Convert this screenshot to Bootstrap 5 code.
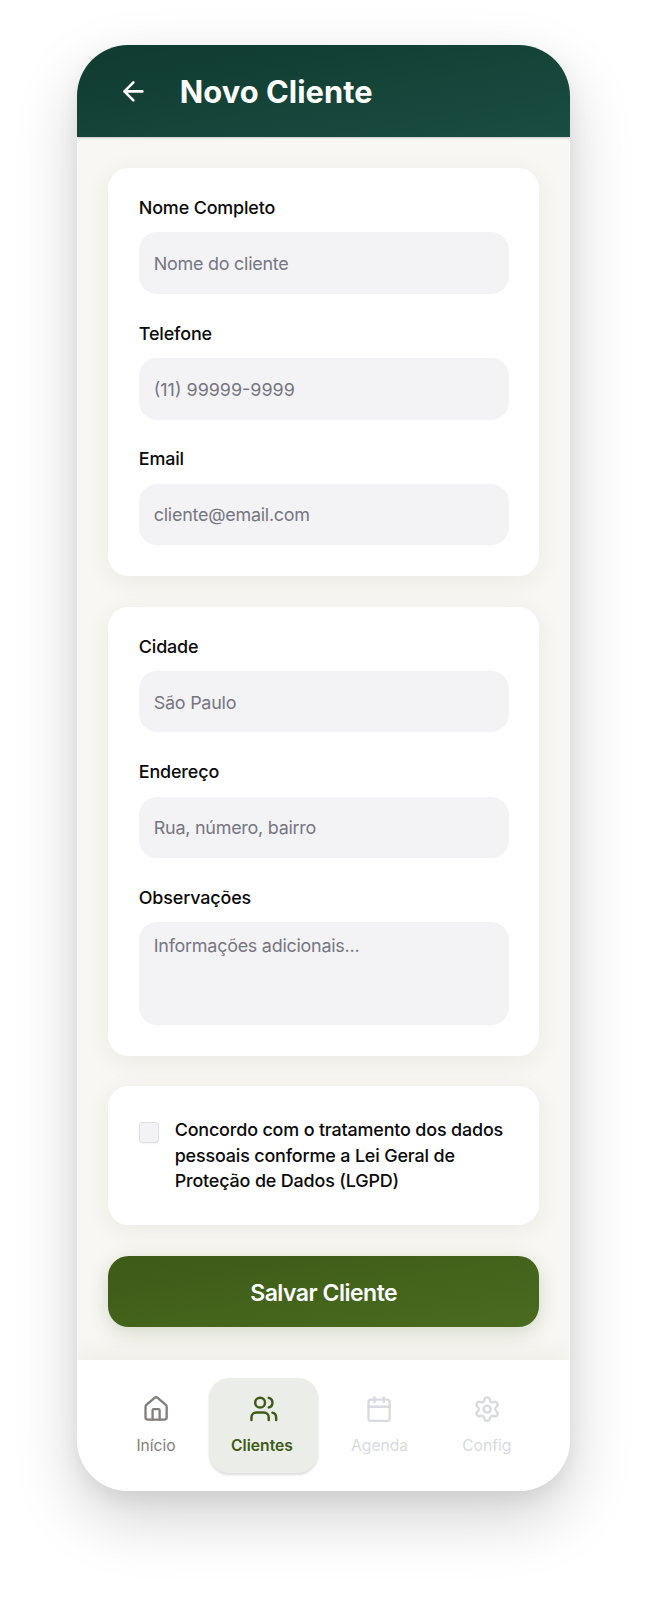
<!DOCTYPE html>
<html lang="pt-BR">
<head>
<meta charset="utf-8">
<meta name="viewport" content="width=device-width, initial-scale=1">
<title>Novo Cliente</title>
<link href="https://cdn.jsdelivr.net/npm/bootstrap@5.3.0/dist/css/bootstrap.min.css" rel="stylesheet">
<style>
body{font-family:Inter,"Liberation Sans",sans-serif;background:#fff;color:#0a0a0a;min-height:1600px;overflow-x:hidden}
.phone{width:492.6px;height:1446px;margin:45px 0 0 77.4px;border-radius:51px;background:#f8f7f3;box-shadow:0 26px 64px rgba(0,0,0,.18),0 8px 20px rgba(0,0,0,.06)}
.screen{border-radius:51px}
.topbar{height:92.3px;padding:1px 0 0 41px;background:linear-gradient(to bottom right,#0f3a2f,#1b4d42);box-shadow:0 1px 2px rgba(0,0,0,.2)}
.topbar h1{font-size:30.8px;font-weight:700;line-height:1;color:#fff;margin:1px 0 0 30.6px;letter-spacing:.05px}
.form-area{padding:31px 29.8px 0;gap:30.8px;border:solid rgba(255,255,255,.55);border-width:0 1px}
.panel{background:#fff;border-radius:20.5px;padding:30.8px 30.6px;box-shadow:0 5px 26px rgba(60,50,20,.065)}
.fields{gap:30.8px}
.form-label{font-size:17.95px;font-weight:500;line-height:17.95px;margin-bottom:15.4px;display:block;letter-spacing:-.16px}
.form-control,.form-control:focus{height:61.5px;border:0;border-radius:18px;background:#f3f3f5;padding:1px 15px 0;font-size:17.95px;letter-spacing:-.25px;color:#0a0a0a}
.form-control::placeholder{color:#767682;opacity:1}
#tel{letter-spacing:0}
textarea.form-control,textarea.form-control:focus{height:102.5px;padding-top:11px;line-height:25.6px;resize:none}
.consent{font-size:17.95px;font-weight:500;line-height:25.6px;letter-spacing:-.17px;margin:0 -6px 0 15.4px}
.form-check-input{width:20.5px;height:20.5px;margin:5px 0 0;border:1.3px solid #dededf;border-radius:5px;background:#f3f3f5;box-shadow:0 1px 2px rgba(0,0,0,.05)}
.btn-save,.btn-save:hover{height:71.8px;border:0;border-radius:20.5px;background:linear-gradient(to bottom right,#3d5a17,#4a6b1f);color:#fff;font-size:23px;font-weight:600;letter-spacing:-.5px;padding-top:9px;box-shadow:0 5px 20px rgba(61,90,23,.2)}
.tabbar{height:131px;padding:18px 0 0 26px;background:#fff;box-shadow:0 -5px 26px rgba(60,50,20,.06)}
.tab{height:94.5px;font-size:15.6px;line-height:20.5px;color:#827e7a;gap:12.5px;padding-top:17px;text-decoration:none}
.tab svg{width:28.2px;height:28.2px}
.tab-home{width:105.2px}
.tab-clients{width:109.8px;background:#ebeee8;color:#3d5a17;font-weight:600;border-radius:20.5px;box-shadow:0 1.3px 2.6px rgba(0,0,0,.14);gap:12px;padding-top:16px}
.tab-clients span{margin-right:3px;font-size:15.7px}
.tab-clients svg{width:29.6px;height:29.6px}
.tab-agenda{width:122.4px}
.tab-config{width:92px}
.tab-off{color:#d8dae0}
.ico{fill:none;stroke:currentColor;stroke-width:2;stroke-linecap:round;stroke-linejoin:round;flex:none}
</style>
</head>
<body>
<div class="phone">
<div class="screen d-flex flex-column h-100 overflow-hidden">
  <header class="topbar d-flex align-items-center flex-shrink-0 text-white">
    <svg class="ico" width="30.8" height="30.8" viewBox="0 0 24 24"><path d="m12 19-7-7 7-7M19 12H5"/></svg>
    <h1>Novo Cliente</h1>
  </header>
  <main class="form-area d-flex flex-column flex-grow-1">
    <section class="panel fields d-flex flex-column">
      <div><label class="form-label" for="nome">Nome Completo</label><input class="form-control" id="nome" placeholder="Nome do cliente"></div>
      <div><label class="form-label" for="tel">Telefone</label><input class="form-control" id="tel" placeholder="(11) 99999-9999"></div>
      <div><label class="form-label" for="email">Email</label><input class="form-control" id="email" placeholder="cliente@email.com"></div>
    </section>
    <section class="panel fields d-flex flex-column">
      <div><label class="form-label" for="cidade">Cidade</label><input class="form-control" id="cidade" placeholder="São Paulo"></div>
      <div><label class="form-label" for="end">Endereço</label><input class="form-control" id="end" placeholder="Rua, número, bairro"></div>
      <div><label class="form-label" for="obs">Observações</label><textarea class="form-control" id="obs" placeholder="Informações adicionais..."></textarea></div>
    </section>
    <section class="panel d-flex align-items-start">
      <input class="form-check-input flex-shrink-0" type="checkbox" id="lgpd">
      <label class="consent" for="lgpd">Concordo com o tratamento dos dados pessoais conforme a Lei Geral de Proteção de Dados (LGPD)</label>
    </section>
    <button class="btn btn-save w-100" type="button">Salvar Cliente</button>
  </main>
  <nav class="tabbar d-flex flex-shrink-0">
    <a class="tab tab-home d-flex flex-column align-items-center"><svg class="ico" viewBox="0 0 24 24"><path d="M15 21v-8a1 1 0 0 0-1-1h-4a1 1 0 0 0-1 1v8"/><path d="M3 10a2 2 0 0 1 .709-1.528l7-5.999a2 2 0 0 1 2.582 0l7 5.999A2 2 0 0 1 21 10v9a2 2 0 0 1-2 2H5a2 2 0 0 1-2-2z"/></svg><span>Início</span></a>
    <a class="tab tab-clients d-flex flex-column align-items-center"><svg class="ico" viewBox="0 0 24 24"><path d="M16 21v-2a4 4 0 0 0-4-4H6a4 4 0 0 0-4 4v2"/><circle cx="9" cy="7" r="4"/><path d="M22 21v-2a4 4 0 0 0-3-3.87M16 3.13a4 4 0 0 1 0 7.75"/></svg><span>Clientes</span></a>
    <a class="tab tab-agenda tab-off d-flex flex-column align-items-center"><svg class="ico" viewBox="0 0 24 24"><path d="M8 2v4M16 2v4M3 10h18"/><rect width="18" height="18" x="3" y="4" rx="2"/></svg><span>Agenda</span></a>
    <a class="tab tab-config tab-off d-flex flex-column align-items-center"><svg class="ico" viewBox="0 0 24 24"><path d="M9.671 4.136a2.34 2.34 0 0 1 4.659 0 2.34 2.34 0 0 0 3.319 1.915 2.34 2.34 0 0 1 2.33 4.033 2.34 2.34 0 0 0 0 3.831 2.34 2.34 0 0 1-2.33 4.033 2.34 2.34 0 0 0-3.319 1.915 2.34 2.34 0 0 1-4.659 0 2.34 2.34 0 0 0-3.32-1.915 2.34 2.34 0 0 1-2.33-4.033 2.34 2.34 0 0 0 0-3.831A2.34 2.34 0 0 1 6.35 6.051a2.34 2.34 0 0 0 3.319-1.915"/><circle cx="12" cy="12" r="3"/></svg><span>Config</span></a>
  </nav>
</div>
</div>
<script src="https://cdn.jsdelivr.net/npm/bootstrap@5.3.0/dist/js/bootstrap.bundle.min.js"></script>
</body>
</html>
